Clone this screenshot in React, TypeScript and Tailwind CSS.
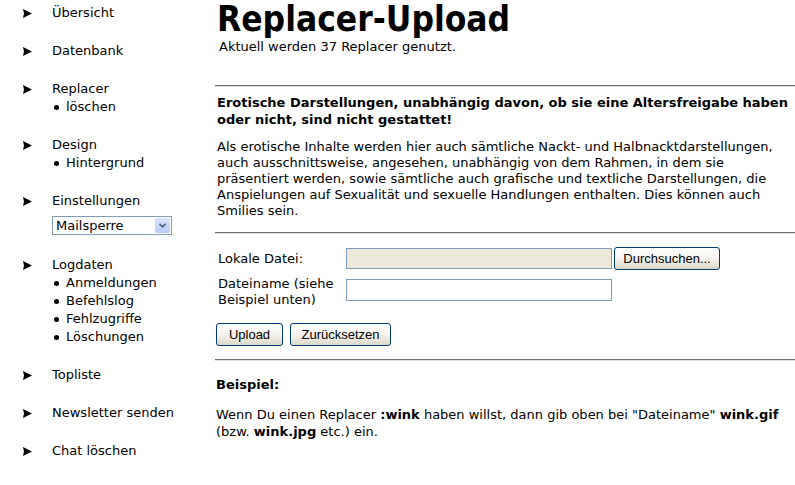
import React from "react";

const Tri = () => (
  <svg width="9" height="9" viewBox="0 0 9 9" className="block">
    <polygon points="0,0 9,4.5 0,9 1,4.5" fill="#000" />
  </svg>
);

const Bullet = ({ children }: { children: React.ReactNode }) => (
  <div className="flex items-center h-[18px]">
    <span className="w-[5px] h-[5px] rounded-full bg-black ml-[2px] mr-[7px]" />
    <span>{children}</span>
  </div>
);

const Group = ({
  label,
  children,
  className = "",
}: {
  label: string;
  children?: React.ReactNode;
  className?: string;
}) => (
  <div className={"flex " + className}>
    <div className="w-[52px] h-[18px] flex items-center pl-[23px]">
      <Tri />
    </div>
    <div className="flex flex-col">
      <div className="h-[18px] flex items-center">{label}</div>
      {children}
    </div>
  </div>
);

const Hr = () => (
  <div className="border-t border-t-[#707070] border-b border-b-[#dcdcdc]" />
);

const XpButton = ({ children, className = "" }: { children: React.ReactNode; className?: string }) => (
  <button
    className={
      "h-[23px] rounded-[3px] border border-[#003c74] bg-gradient-to-b from-[#ffffff] via-[#f4f3ee] to-[#dcd8c8] text-[13px] text-black flex items-center justify-center " +
      className
    }
    style={{ fontFamily: '"Liberation Sans", Arial, sans-serif' }}
  >
    {children}
  </button>
);

export default function App() {
  return (
    <div
      className="w-[795px] h-[485px] bg-white text-black text-[13px] flex overflow-hidden"
      style={{ fontFamily: '"DejaVu Sans", Verdana, sans-serif' }}
    >
      {/* Sidebar */}
      <div className="w-[215px] shrink-0 pt-[4px] flex flex-col gap-[20px]">
        <Group label="Übersicht" />
        <Group label="Datenbank" />
        <Group label="Replacer">
          <Bullet>löschen</Bullet>
        </Group>
        <Group label="Design">
          <Bullet>Hintergrund</Bullet>
        </Group>
        <Group label="Einstellungen" className="mb-[1px]">
          <div className="mt-[6px] w-[120px] h-[19px] border border-[#7f9db9] flex items-center justify-between pl-[3px] pr-[1px]">
            <span className="leading-none">Mailsperre</span>
            <span className="w-[15px] h-[15px] rounded-[2px] bg-gradient-to-b from-[#dbe6fd] to-[#b6cbf7] flex items-center justify-center">
              <svg width="7" height="5" viewBox="0 0 7 5">
                <polyline points="0.5,0.8 3.5,3.8 6.5,0.8" fill="none" stroke="#4d6185" strokeWidth="1.6" />
              </svg>
            </span>
          </div>
        </Group>
        <Group label="Logdaten">
          <Bullet>Anmeldungen</Bullet>
          <Bullet>Befehlslog</Bullet>
          <Bullet>Fehlzugriffe</Bullet>
          <Bullet>Löschungen</Bullet>
        </Group>
        <Group label="Topliste" />
        <Group label="Newsletter senden" />
        <Group label="Chat löschen" />
      </div>

      {/* Main */}
      <div className="flex-1 flex flex-col">
        <h1
          className="text-[35px] font-bold leading-[38px] h-[38px] pl-[2px]"
          style={{ fontFamily: '"DejaVu Sans Condensed", "Liberation Sans", sans-serif' }}
        >
          Replacer-Upload
        </h1>
        <div className="pl-[4px] leading-[16px] mt-[1px]">Aktuell werden 37 Replacer genutzt.</div>
        <div className="mt-[30px]">
          <Hr />
        </div>
        <div className="pl-[2px] mt-[7px] font-bold leading-[17px]">
          Erotische Darstellungen, unabhängig davon, ob sie eine Altersfreigabe haben oder nicht, sind nicht gestattet!
        </div>
        <div className="pl-[2px] mt-[11px] leading-[16px] pr-[8px]">
          Als erotische Inhalte werden hier auch sämtliche Nackt- und Halbnacktdarstellungen, auch ausschnittsweise,
          angesehen, unabhängig von dem Rahmen, in dem sie präsentiert werden, sowie sämtliche auch grafische und
          textliche Darstellungen, die Anspielungen auf Sexualität und sexuelle Handlungen enthalten. Dies können auch
          Smilies sein.
        </div>
        <div className="mt-[13px]">
          <Hr />
        </div>

        <div className="mt-[13px] flex items-center">
          <div className="w-[131px] pl-[3px]">Lokale Datei:</div>
          <div className="w-[266px] h-[21px] border border-[#7f9db9] bg-[#ece9d8]" />
          <XpButton className="ml-[2px] w-[106px] h-[22px]">Durchsuchen...</XpButton>
        </div>
        <div className="mt-[9px] flex items-start">
          <div className="w-[131px] pl-[3px] leading-[16px] mt-[-3px]">
            Dateiname (siehe
            <br />
            Beispiel unten)
          </div>
          <div className="w-[266px] h-[22px] border border-[#7f9db9] bg-white" />
        </div>
        <div className="mt-[15px] flex items-center gap-[7px] pl-[1px]">
          <XpButton className="w-[67px]">Upload</XpButton>
          <XpButton className="w-[101px]">Zurücksetzen</XpButton>
        </div>
        <div className="mt-[13px]">
          <Hr />
        </div>
        <div className="pl-[1px] mt-[16px] font-bold leading-[16px]">Beispiel:</div>
        <div className="pl-[1px] mt-[13px] leading-[17px] pr-[12px]">
          Wenn Du einen Replacer <b>:wink</b> haben willst, dann gib oben bei "Dateiname" <b>wink.gif</b> (bzw.{" "}
          <b>wink.jpg</b> etc.) ein.
        </div>
      </div>
    </div>
  );
}
